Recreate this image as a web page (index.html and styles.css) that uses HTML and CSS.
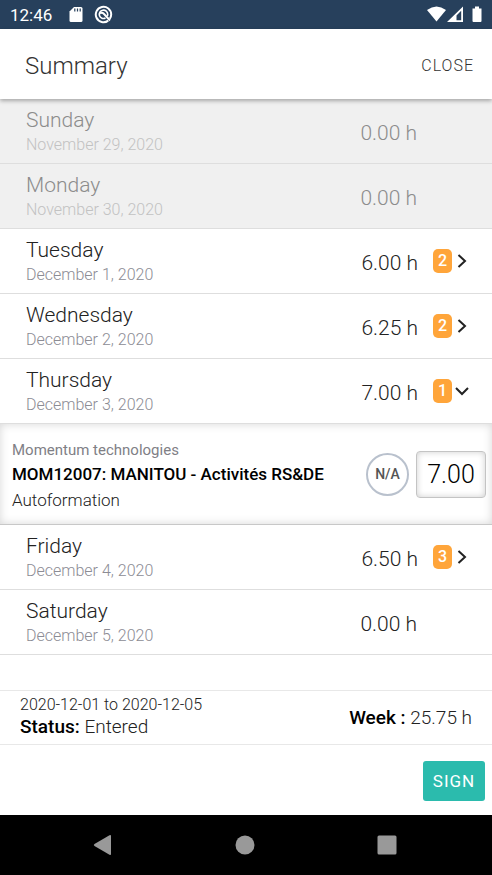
FILE: index.html
```html
<!DOCTYPE html>
<html lang="en">
<head>
<meta charset="utf-8">
<meta name="viewport" content="width=device-width, initial-scale=1">
<title>Summary</title>
<link rel="stylesheet" href="styles.css">
</head>
<body>
<div class="statusbar">
  <span class="clock">12:46</span>
  <svg class="sd" width="14" height="17" viewBox="0 0 14 17" aria-hidden="true"><path fill="#fff" d="M5 1H12Q13.500 1 13.500 2.500V14.500Q13.500 16 12 16H2Q.5 16 .5 14.500V5.500Z"/><path stroke="#27405c" stroke-width="1.200" d="M5.800 2.500v3M8.500 2.500v3M11.200 2.500v3"/></svg>
  <svg class="sync" width="19" height="19" viewBox="0 0 19 19" fill="none" stroke="#fff" aria-hidden="true"><path stroke-width="2" d="M14.200 15.600A7.700 7.700 0 1 1 17.200 9.500q0 2.200-1.400 4.200"/><path stroke-width="1.600" d="M11.500 13A4.200 4.200 0 1 1 13.700 9.300q0 1.100-.4 1.900"/><path stroke-width="2" d="M6 8.400Q8 7 9.800 8.800L16 15.500"/></svg>
  <svg class="signals" width="56" height="17" viewBox="0 0 56 17" aria-hidden="true"><path fill="#fff" d="M0 4Q9.500-3 19 4L9.500 15.500Z"/><path fill="#fff" fill-rule="evenodd" d="M20 16 36 .5V16ZM29.500 9.500V14.200H34.200V4.800Z"/><path fill="#fff" d="M45.500 2.500H48V.5H52V2.500H54.500V15Q54.500 16 53.500 16H46.500Q45.500 16 45.500 15Z"/></svg>
</div>
<header class="header">
  <h1>Summary</h1>
  <button class="close" type="button">CLOSE</button>
</header>
<main>
  <section class="day disabled">
    <div class="name"><h2>Sunday</h2><p>November 29, 2020</p></div>
    <span class="hours">0.00 h</span>
  </section>
  <section class="day disabled">
    <div class="name"><h2>Monday</h2><p>November 30, 2020</p></div>
    <span class="hours">0.00 h</span>
  </section>
  <section class="day">
    <div class="name"><h2>Tuesday</h2><p>December 1, 2020</p></div>
    <span class="hours">6.00 h</span>
    <button class="toggle" type="button" aria-expanded="false" aria-label="Tuesday entries"><span class="badge">2</span><svg width="14" height="16" viewBox="0 0 14 16"><path d="M3.500 2 10 8 3.500 14"/></svg></button>
  </section>
  <section class="day">
    <div class="name"><h2>Wednesday</h2><p>December 2, 2020</p></div>
    <span class="hours">6.25 h</span>
    <button class="toggle" type="button" aria-expanded="false" aria-label="Wednesday entries"><span class="badge">2</span><svg width="14" height="16" viewBox="0 0 14 16"><path d="M3.500 2 10 8 3.500 14"/></svg></button>
  </section>
  <section class="day">
    <div class="name"><h2>Thursday</h2><p>December 3, 2020</p></div>
    <span class="hours">7.00 h</span>
    <button class="toggle" type="button" aria-expanded="true" aria-label="Thursday entries"><span class="badge">1</span><svg width="14" height="16" viewBox="0 0 14 16"><path d="M1 5 7 11 13 5"/></svg></button>
  </section>
  <section class="entry">
    <div class="project">
      <p class="client">Momentum technologies</p>
      <h3>MOM12007: MANITOU - Activités RS&amp;DE</h3>
      <p class="task">Autoformation</p>
    </div>
    <span class="rate">N/A</span>
    <input class="amount" type="text" inputmode="decimal" value="7.00" aria-label="Hours for Autoformation">
  </section>
  <section class="day">
    <div class="name"><h2>Friday</h2><p>December 4, 2020</p></div>
    <span class="hours">6.50 h</span>
    <button class="toggle" type="button" aria-expanded="false" aria-label="Friday entries"><span class="badge">3</span><svg width="14" height="16" viewBox="0 0 14 16"><path d="M3.500 2 10 8 3.500 14"/></svg></button>
  </section>
  <section class="day">
    <div class="name"><h2>Saturday</h2><p>December 5, 2020</p></div>
    <span class="hours">0.00 h</span>
  </section>
</main>
<section class="totals">
  <div>
    <p class="range">2020-12-01 to 2020-12-05</p>
    <p class="total"><strong>Status:</strong> Entered</p>
  </div>
  <p class="total"><strong>Week :</strong> 25.75 h</p>
</section>
<div class="actions"><button class="sign" type="button">SIGN</button></div>
<nav class="navbar">
  <button type="button" aria-label="Back"><svg width="22" height="22" viewBox="0 0 22 22"><path d="M19 2V20Q19 21.500 17.500 20.700L2.500 12Q1 11 2.500 10L17.500 1.300Q19 .5 19 2Z"/></svg></button>
  <button type="button" aria-label="Home"><svg width="22" height="22" viewBox="0 0 22 22"><circle cx="11" cy="11" r="9.500"/></svg></button>
  <button type="button" aria-label="Recent apps"><svg width="22" height="22" viewBox="0 0 22 22"><rect x="1.500" y="1.500" width="19" height="19" rx="1.500"/></svg></button>
</nav>
</body>
</html>
```
FILE: styles.css
```css
* { box-sizing: border-box; }
body {
  margin: 0;
  min-height: 100vh;
  display: flex;
  flex-direction: column;
  background: #fff;
  color: #222;
  font-family: Roboto, "Liberation Sans", sans-serif;
  font-weight: 300;
}
h1, h2, h3, p { margin: 0; font-weight: inherit; }
button { border: 0; padding: 0; background: none; font: inherit; color: inherit; }
strong { font-weight: 500; color: #000; }

.statusbar {
  display: flex;
  align-items: center;
  height: 29px;
  padding: 0 9px 0 10px;
  background: #27405c;
  color: #fff;
}
.clock { font-size: 17px; line-height: 20px; font-weight: 400; }
.sd { margin-left: 17px; }
.sync { margin-left: 11px; }
.signals { margin-left: auto; }

.header {
  display: flex;
  align-items: center;
  justify-content: space-between;
  height: 70px;
  padding: 3px 18px 0 25px;
  position: relative;
  z-index: 1;
  background: #fff;
  box-shadow: 0 2px 4px rgba(0, 0, 0, 0.3);
}
.header h1 { font-size: 24px; line-height: 32px; color: #333; }
.close { font-size: 16px; line-height: 24px; letter-spacing: 1px; color: #333; }

main { flex: 1; margin-bottom: 35px; }
.day {
  display: flex;
  align-items: center;
  height: 65px;
  padding-left: 26px;
  padding-right: 75px;
  border-bottom: 1px solid #dedede;
}
.day:has(.toggle) { padding-right: 23px; }
.name { flex: 1; }
.name h2 { font-size: 21px; line-height: 28px; }
.name p { font-size: 16px; line-height: 22px; color: #8c8c94; }
.hours { padding-top: 4px; font-size: 21px; line-height: 28px; }
.disabled { background: #f0f0f0; }
.disabled h2, .disabled .hours { color: #8c8c8c; }
.disabled .name p { color: #c2c2c2; }
.toggle { display: flex; align-items: center; gap: 3px; margin-left: 15px; }
.toggle path { fill: none; stroke: #222; stroke-width: 2; }
.badge {
  width: 19px;
  border-radius: 5px;
  background: #ffa53a;
  color: #fff;
  font-size: 16px;
  line-height: 24px;
  font-weight: 500;
  text-align: center;
}

.entry {
  display: flex;
  align-items: center;
  height: 101px;
  padding: 0 6px 0 12px;
  border-bottom: 1px solid #c8c8c8;
  box-shadow: inset 0 0 10px rgba(0, 0, 0, 0.16);
}
.project { flex: 1; padding-top: 3px; }
.client { font-size: 15px; line-height: 22px; font-weight: 400; color: #808086; }
.entry h3 { font-size: 17px; line-height: 26px; font-weight: 500; color: #000; }
.task { font-size: 17px; line-height: 26px; }
.rate {
  width: 43px;
  border: 2px solid #b9c1cd;
  border-radius: 50%;
  margin-right: 7px;
  background: #fff;
  font-size: 14px;
  line-height: 39px;
  font-weight: 500;
  text-align: center;
  color: #555;
}
.amount {
  width: 70px;
  height: 47px;
  border: 1px solid #c4c4c4;
  border-radius: 4px;
  padding: 0;
  background: #fff;
  box-shadow: inset 0 0 6px rgba(0, 0, 0, 0.2);
  font: inherit;
  font-size: 25px;
  text-align: center;
  color: #000;
}

.totals {
  display: flex;
  align-items: center;
  justify-content: space-between;
  height: 55px;
  padding: 0 20px;
  border-top: 1px solid #e8e8e8;
  border-bottom: 1px solid #e8e8e8;
}
.range { font-size: 16px; line-height: 18px; }
.total { font-size: 19px; line-height: 26px; }
.actions { display: flex; justify-content: flex-end; padding: 16px 7px 14px; }
.sign {
  width: 62px;
  height: 40px;
  border-radius: 3px;
  background: #2bbbad;
  color: #fff;
  font-size: 17px;
  font-weight: 400;
  letter-spacing: 1px;
}
.navbar {
  display: flex;
  align-items: center;
  height: 60px;
  padding: 0 34px 0 32px;
  background: #000;
}
.navbar button { flex: 1; height: 60px; }
.navbar svg { display: block; margin: 0 auto; fill: #999; }
```
